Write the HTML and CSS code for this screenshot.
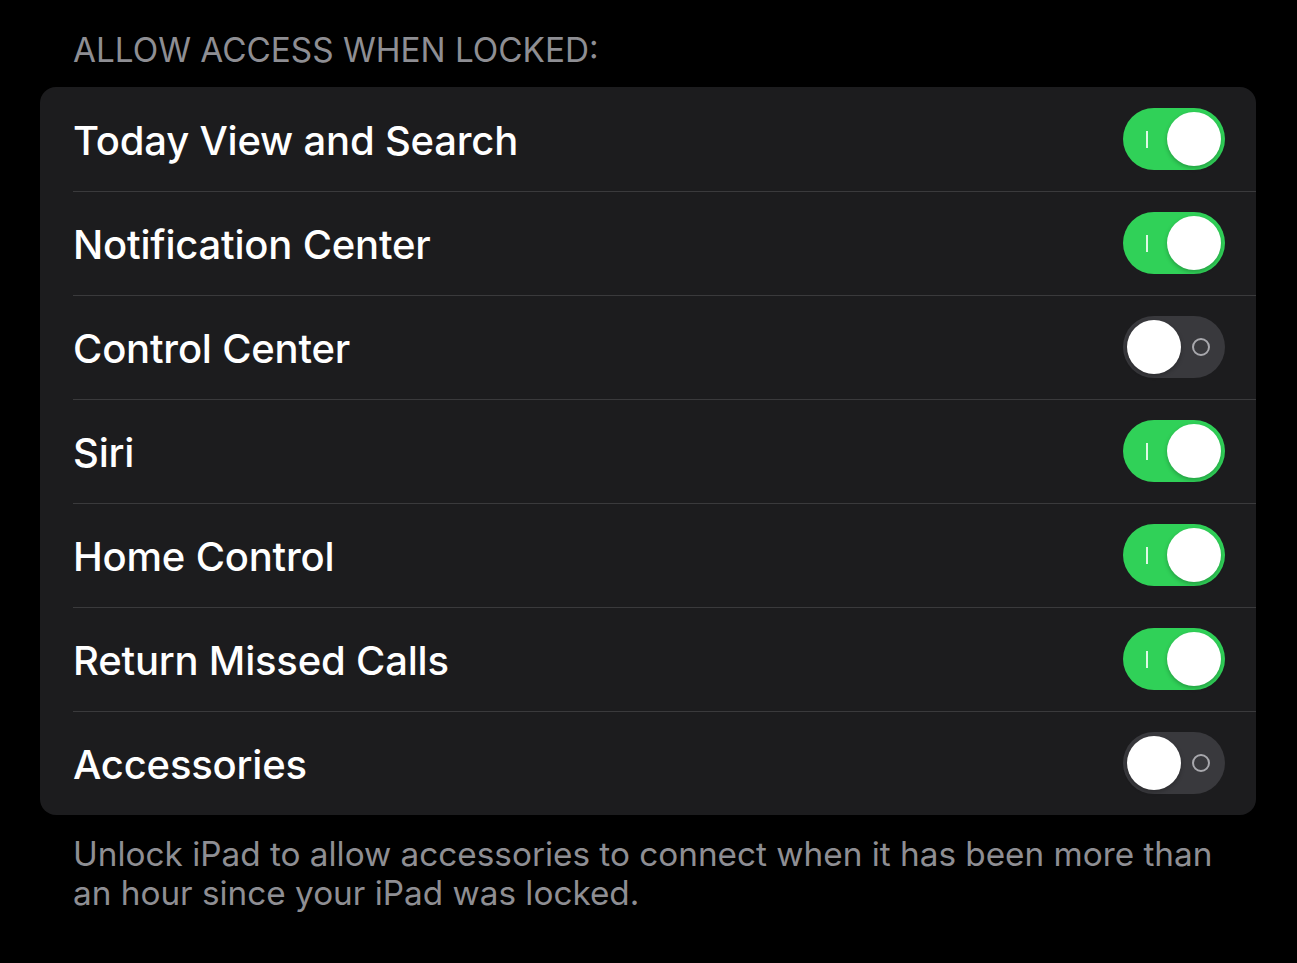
FILE: index.html
```html
<!DOCTYPE html>
<html>
<head>
<meta charset="utf-8">
<link rel="stylesheet" href="styles.css">
</head>
<body>
<div class="page">
  <div class="header">ALLOW ACCESS WHEN LOCKED:</div>
  <div class="card">
    <div class="row"><span class="label">Today View and Search</span><span class="toggle on"><span class="mark-i"></span><span class="knob"></span></span></div>
    <div class="row"><span class="label">Notification Center</span><span class="toggle on"><span class="mark-i"></span><span class="knob"></span></span></div>
    <div class="row"><span class="label">Control Center</span><span class="toggle off"><span class="knob"></span><span class="mark-o"></span></span></div>
    <div class="row"><span class="label">Siri</span><span class="toggle on"><span class="mark-i"></span><span class="knob"></span></span></div>
    <div class="row"><span class="label">Home Control</span><span class="toggle on"><span class="mark-i"></span><span class="knob"></span></span></div>
    <div class="row"><span class="label">Return Missed Calls</span><span class="toggle on"><span class="mark-i"></span><span class="knob"></span></span></div>
    <div class="row"><span class="label">Accessories</span><span class="toggle off"><span class="knob"></span><span class="mark-o"></span></span></div>
  </div>
  <div class="footer">Unlock iPad to allow accessories to connect when it has been more than an hour since your iPad was locked.</div>
</div>
</body>
</html>
```
FILE: styles.css
```css
html, body {
  margin: 0;
  padding: 0;
  background: #000;
}
body {
  font-family: Inter, Roboto, "Liberation Sans", sans-serif;
  -webkit-font-smoothing: antialiased;
}
.page {
  width: 1297px;
  height: 963px;
  box-sizing: border-box;
  padding: 0 41px 0 40px;
}
.header {
  color: #8e8e93;
  font-size: 33.3px;
  line-height: 40px;
  padding: 30px 0 0 33px;
  height: 87px;
  box-sizing: border-box;
}
.card {
  background: #1c1c1e;
  border-radius: 16px;
  overflow: hidden;
}
.row {
  position: relative;
  height: 104px;
  display: flex;
  align-items: center;
  justify-content: space-between;
  padding: 0 31px 0 33px;
}
.row + .row::before {
  content: "";
  position: absolute;
  left: 33px;
  right: 0;
  top: 0;
  height: 1px;
  background: #3a3a3c;
}
.label {
  color: #fff;
  font-size: 40px;
  font-weight: 500;
  letter-spacing: -0.2px;
  padding-top: 2px;
}
.toggle {
  position: relative;
  width: 102px;
  height: 62px;
  border-radius: 31px;
  display: flex;
  align-items: center;
  box-sizing: border-box;
  padding: 0 4px;
}
.toggle.on {
  background: #30d158;
  justify-content: flex-end;
}
.toggle.off {
  background: #39393d;
  justify-content: flex-start;
}
.knob {
  width: 54px;
  height: 54px;
  border-radius: 50%;
  background: #fff;
  box-shadow: 0 2px 4px rgba(0,0,0,0.25);
}
.mark-i {
  position: absolute;
  left: 23px;
  top: 23px;
  width: 2px;
  height: 17px;
  background: #fff;
  opacity: 0.85;
}
.mark-o {
  position: absolute;
  left: 69px;
  top: 22px;
  width: 14px;
  height: 14px;
  border: 2px solid #a8a8ad;
  border-radius: 50%;
}
.footer {
  color: #8e8e93;
  font-size: 33.3px;
  line-height: 39px;
  padding: 20px 40px 0 33px;
}
```
